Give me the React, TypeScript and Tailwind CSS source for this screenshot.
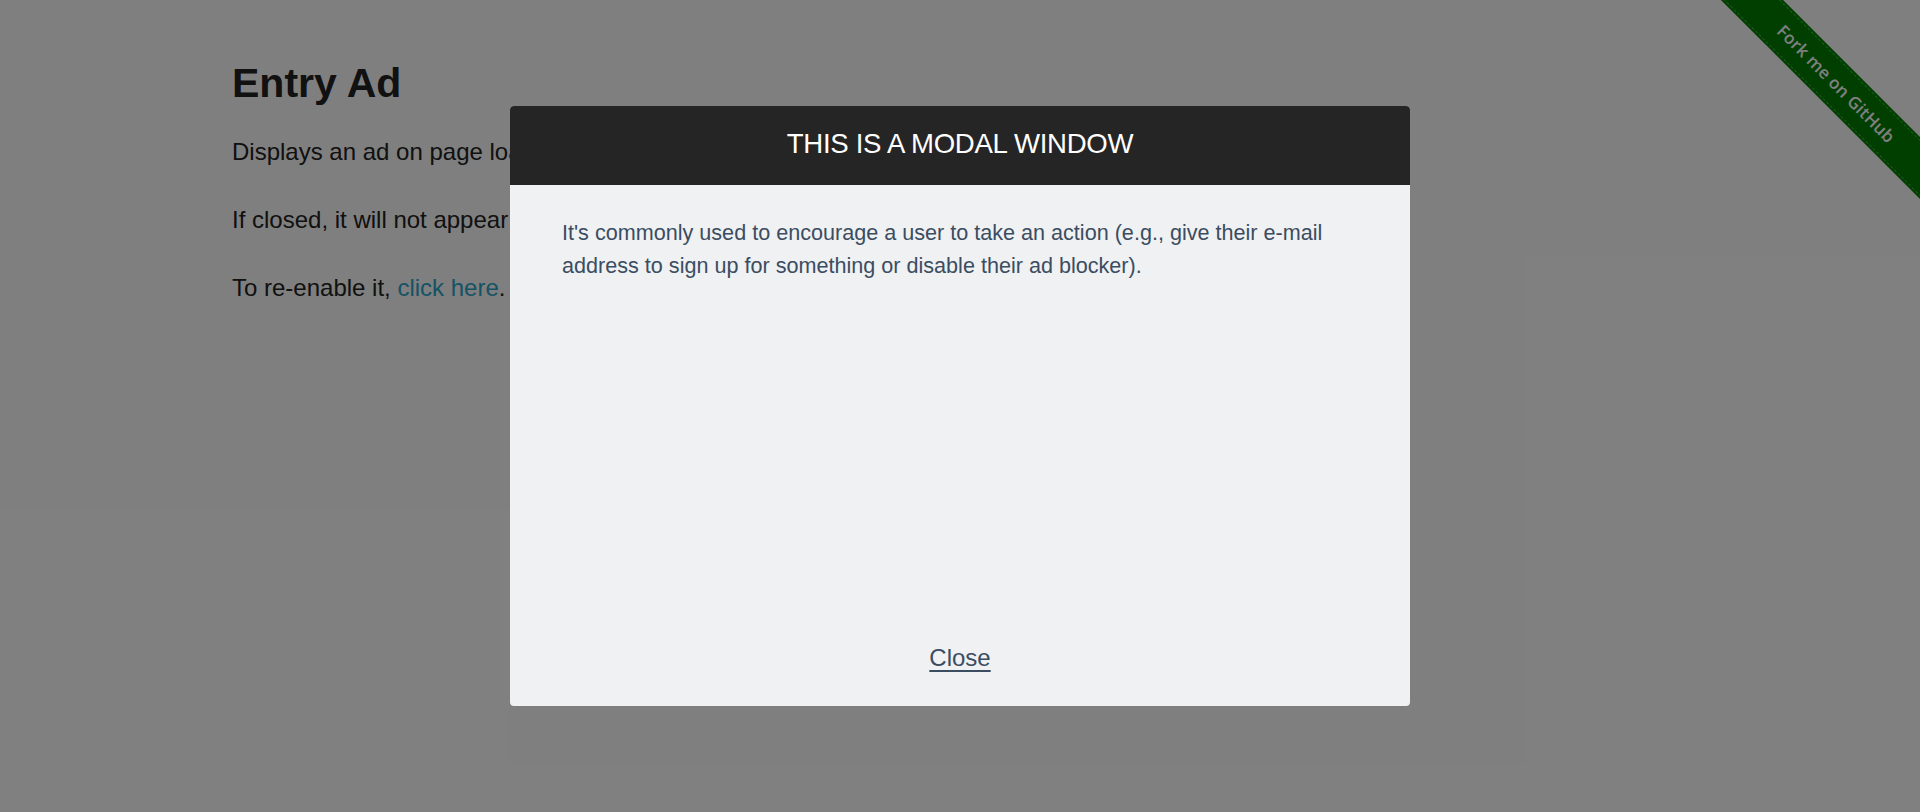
import React from "react";

const font = { fontFamily: '"Liberation Sans", Arial, sans-serif' };

function ForkRibbon() {
  return (
    <div className="absolute top-0 right-0 w-[200px] h-[200px] overflow-hidden">
      <div className="absolute left-[-34px] top-[62px] w-[300px] h-[44px] rotate-45 bg-[#007f00] flex items-center justify-center">
        <div className="absolute inset-x-0 top-[2px] border-t border-dashed border-white/30" />
        <div className="absolute inset-x-0 bottom-[2px] border-t border-dashed border-white/30" />
        <span
          className="text-white text-[17px] font-semibold tracking-[0.2px]"
          style={{ fontFamily: '"Open Sans", "DejaVu Sans", sans-serif' }}
        >
          Fork me on GitHub
        </span>
      </div>
    </div>
  );
}

export default function App() {
  return (
    <div className="relative w-full h-[812px] bg-white overflow-hidden text-[#222]" style={font}>
      <ForkRibbon />

      {/* Page content */}
      <div className="mx-auto max-w-[1456px] pt-[60px]">
        <h3 className="text-[41px] leading-[47px] font-bold">Entry Ad</h3>
        <p className="mt-[28px] text-[24px] leading-[33px]">
          Displays an ad on page load.
        </p>
        <p className="mt-[35px] text-[24px] leading-[33px]">
          If closed, it will not appear on subsequent page loads.
        </p>
        <p className="mt-[35px] text-[24px] leading-[33px]">
          To re-enable it,{" "}
          <a href="#" className="text-[#2ba6cb]">
            click here
          </a>
          .
        </p>
      </div>

      {/* Overlay */}
      <div className="absolute inset-0 bg-black/50" />

      {/* Modal */}
      <div className="absolute left-[510px] top-[106px] w-[900px] h-[600px] rounded-[4px] overflow-hidden bg-[#f0f1f3] flex flex-col">
        <div className="h-[79px] pb-[4px] bg-[#252525] flex items-center justify-center">
          <h3 className="text-white text-[27.6px] leading-none tracking-[-0.3px]">THIS IS A MODAL WINDOW</h3>
        </div>
        <div className="flex-1 px-[52px] pt-[31px] text-[21.6px] leading-[33px] text-[#3b4d61]">
          <p>
            It's commonly used to encourage a user to take an action (e.g., give their e-mail
            address to sign up for something or disable their ad blocker).
          </p>
        </div>
        <div className="pb-[35px] flex justify-center">
          <a href="#" className="text-[24px] leading-[26px] text-[#3b4d61] underline underline-offset-[4px]">
            Close
          </a>
        </div>
      </div>
    </div>
  );
}
